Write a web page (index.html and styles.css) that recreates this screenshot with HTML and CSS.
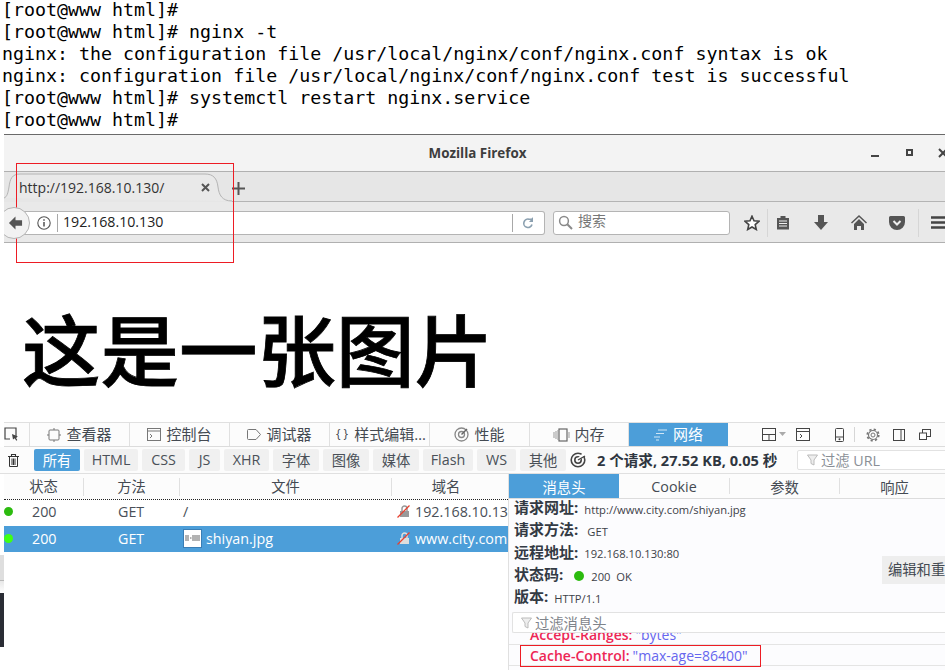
FILE: index.html
```html
<!DOCTYPE html>
<html lang="zh-CN">
<head>
<meta charset="utf-8">
<title>nginx cache-control</title>
<link rel="stylesheet" href="styles.css">
</head>
<body>
<div class="page">
  <pre class="terminal">[root@www html]#
[root@www html]# nginx -t
nginx: the configuration file /usr/local/nginx/conf/nginx.conf syntax is ok
nginx: configuration file /usr/local/nginx/conf/nginx.conf test is successful
[root@www html]# systemctl restart nginx.service
[root@www html]#</pre>

  <section class="window">
    <div class="titlebar">
      <span></span>
      <span class="wintitle">Mozilla Firefox</span>
      <div class="winctl">
        <svg class="w-min" width="10" height="10" viewBox="0 0 10 10"><rect x="1" y="7" width="8" height="2" fill="#444"/></svg>
        <svg width="8" height="8" viewBox="0 0 8 8"><rect x="1" y="1" width="5" height="5" fill="none" stroke="#444" stroke-width="2"/></svg>
        <svg width="10" height="10" viewBox="0 0 10 10"><path d="M1 1l8 8M9 1l-8 8" stroke="#444" stroke-width="2"/></svg>
      </div>
    </div>
    <div class="tabstrip">
      <div class="tab">
        <svg class="tabshape" width="229" height="29" viewBox="0 0 229 29"><path d="M0 25C3 24 4 20 5 14C6 6 8 1 16 1H201C209 1 213 5 214 14C215 22 218 28 228 28" fill="#e9e9e9" stroke="#b4b4b4"/></svg>
        <span class="tabtext">http://192.168.10.130/</span>
        <svg class="tabclose" width="9" height="9" viewBox="0 0 9 9"><path d="M1 1l7 7M8 1l-7 7" stroke="#555" stroke-width="2"/></svg>
      </div>
      <svg class="newtab" width="13" height="13" viewBox="0 0 13 13"><path d="M6.500 0v13M0 6.500h13" stroke="#555" stroke-width="2"/></svg>
    </div>
    <div class="navbar">
      <div class="backbtn">
        <svg width="15" height="14" viewBox="0 0 16 14"><path d="M8 0L1 7l7 7v-4h7V4H8z" fill="#555"/></svg>
      </div>
      <div class="urlbar">
        <svg width="14" height="14" viewBox="0 0 14 14"><circle cx="7" cy="7" r="6.200" fill="none" stroke="#555" stroke-width="1.100"/><path d="M7 6v4.500M7 3.200v1.600" stroke="#444" stroke-width="1.400"/></svg>
        <span class="vsep"></span>
        <span class="urltext">192.168.10.130</span>
        <span class="vsep end"></span>
        <svg class="reload" width="12" height="12" viewBox="0 0 12 12"><path d="M10 7.500A4.200 4.200 0 1 1 7 2.200H10" fill="none" stroke="#8ba0b0" stroke-width="1.600"/><path d="M11 0v5H7z" fill="#8ba0b0"/></svg>
      </div>
      <div class="searchbar">
        <svg width="15" height="15" viewBox="0 0 15 15"><circle cx="6" cy="6" r="4.400" fill="none" stroke="#8a8a8a" stroke-width="1.500"/><path d="M9.300 9.300L14 14" stroke="#8a8a8a" stroke-width="2"/></svg>
        <span class="searchtext">搜索</span>
      </div>
      <div class="navicons">
        <svg class="i-star" width="16" height="16" viewBox="0 0 16 16"><path d="M8 1.200l2 4.600 5 .5-3.800 3.300 1.100 4.900L8 12l-4.300 2.500 1.100-4.900L1 6.300l5-.5z" fill="#fff" stroke="#444" stroke-width="1.600"/></svg>
        <span class="vsep light sep-star"></span>
        <svg class="i-clip" width="14" height="15" viewBox="0 0 14 15"><path d="M1 3h3.500V1h5v2H13v11.500H1z" fill="#555"/><path d="M3 6h8M3 8.500h8M3 11h8" stroke="#eee" stroke-width="1"/></svg>
        <svg class="i-down" width="16" height="15" viewBox="0 0 16 15"><path d="M5 0h6v7h4l-7 8-7-8h4z" fill="#555"/></svg>
        <svg class="i-home" width="16" height="15" viewBox="0 0 16 15"><path d="M8 0L0 7.500l1 1L8 2l7 6.500 1-1z" fill="#555"/><path d="M3 9l5-5 5 5v6h-3v-4H6v4H3z" fill="#555"/></svg>
        <svg class="i-pocket" width="16" height="14" viewBox="0 0 16 14"><path d="M1.500 0h13A1.500 1.500 0 0 1 16 1.500V6a8 8 0 0 1-16 0V1.500A1.500 1.500 0 0 1 1.500 0z" fill="#555"/><path d="M4.500 5L8 8.500 11.500 5" fill="none" stroke="#eee" stroke-width="2"/></svg>
        <span class="vsep light sep-menu"></span>
        <svg class="i-menu" width="16" height="13" viewBox="0 0 16 13"><path d="M0 1.500h16M0 6.500h16M0 11.500h16" stroke="#444" stroke-width="2.400"/></svg>
      </div>
    </div>
  </section>

  <h1 class="headline">这是一张图片</h1>

  <section class="devtools">
    <div class="dt-tabs">
      <div class="dt-pick">
        <svg width="16" height="15" viewBox="0 0 16 15"><path d="M12 11V1H1v11h5" fill="none" stroke="#444" stroke-width="1.200"/><path d="M8 7l6 2.500-2.300 1 1.600 2.500-1 .7-1.600-2.500L9 12.500z" fill="#444"/></svg>
      </div>
      <div class="dt-tab">
        <svg width="14" height="14" viewBox="0 0 14 14"><rect x="2" y="2" width="10" height="10" rx="1" fill="none" stroke="#777"/><path d="M0 7h2M12 7h2M7 0v2M7 12v2" stroke="#777"/></svg><span>查看器</span></div>
      <div class="dt-tab">
        <svg width="14" height="13" viewBox="0 0 14 13"><rect x=".5" y=".5" width="13" height="12" fill="none" stroke="#777"/><path d="M.5 3h13M3 6l2 2-2 2" fill="none" stroke="#777"/></svg><span>控制台</span></div>
      <div class="dt-tab">
        <svg width="14" height="11" viewBox="0 0 14 11"><path d="M1.500.5H9L13.500 5.500 9 10.500H1.500a1 1 0 0 1-1-1v-8a1 1 0 0 1 1-1z" fill="none" stroke="#777"/></svg><span>调试器</span></div>
      <div class="dt-tab dt-tab-style"><span class="braces">{ }</span><span>样式编辑…</span></div>
      <div class="dt-tab">
        <svg width="15" height="15" viewBox="0 0 15 15"><circle cx="7.500" cy="7.500" r="6.500" fill="none" stroke="#888" stroke-width="1.300"/><circle cx="7.500" cy="7.500" r="3" fill="none" stroke="#888" stroke-width="1.300"/><path d="M7.500 7.500L13 2" stroke="#666" stroke-width="1.500"/></svg><span>性能</span></div>
      <div class="dt-tab dt-tab-mem">
        <svg width="19" height="14" viewBox="0 0 19 14"><rect x="6" y="1" width="8" height="12" fill="none" stroke="#666" stroke-width="1.200"/><path d="M1 4v6M3 3v8M5 2v10M16 4v6" stroke="#999"/></svg><span>内存</span></div>
      <div class="dt-tab active">
        <svg width="14" height="12" viewBox="0 0 14 12"><path d="M4 1h9M2 4.500h8M0 8h6M2 11h3" stroke="#cfe5f5" stroke-width="1.200"/></svg><span>网络</span></div>
      <div class="dt-tools">
        <svg class="t-layout" width="24" height="13" viewBox="0 0 24 13"><rect x=".5" y=".5" width="13" height="12" fill="none" stroke="#444"/><path d="M.5 6.500h13M7 6.500v6" stroke="#444"/><path d="M17 4h7l-3.500 4z" fill="#aaa"/></svg>
        <svg class="t-console" width="14" height="13" viewBox="0 0 14 13"><rect x=".5" y=".5" width="13" height="12" fill="none" stroke="#444"/><path d="M.5 3.500h13M4 6l2 2-2 2" fill="none" stroke="#444"/></svg>
        <svg class="t-phone" width="9" height="14" viewBox="0 0 9 14"><rect x=".5" y=".5" width="8" height="13" rx="1" fill="none" stroke="#444"/><path d="M.5 9h8" stroke="#444"/><circle cx="4.500" cy="11.300" r="1" fill="#444"/></svg>
        <span class="vsep t-sep"></span>
        <svg class="t-gear" width="14" height="14" viewBox="0 0 14 14"><circle cx="7" cy="7" r="2" fill="none" stroke="#777"/><circle cx="7" cy="7" r="4.500" fill="none" stroke="#777" stroke-width="1.100"/><circle cx="7" cy="7" r="5.700" fill="none" stroke="#777" stroke-width="1.800" stroke-dasharray="2.200 2.280"/></svg>
        <svg class="t-side" width="12" height="12" viewBox="0 0 12 12"><rect x=".5" y=".5" width="11" height="11" fill="none" stroke="#444"/><path d="M8 .5v11" stroke="#444"/></svg>
        <svg class="t-win" width="12" height="11" viewBox="0 0 12 11"><rect x="3.500" y=".5" width="8" height="7" fill="none" stroke="#444"/><rect x=".5" y="4" width="7" height="6.500" fill="#fff" stroke="#444"/></svg>
        <svg class="t-x" width="8" height="8" viewBox="0 0 8 8"><path d="M1 1l6 6M7 1L1 7" stroke="#444"/></svg>
      </div>
    </div>

    <div class="dt-filter">
      <svg class="trash" width="11" height="13" viewBox="0 0 11 13"><path d="M0 2.500h11M3.500 2V.5h4V2" fill="none" stroke="#333" stroke-width="1.100"/><path d="M1.500 3v9.500h8V3M4 4.500v6.500M5.500 4.500v6.500M7 4.500v6.500" fill="none" stroke="#333"/></svg>
      <button class="fbtn on w46">所有</button>
      <button class="fbtn w54">HTML</button>
      <button class="fbtn w43">CSS</button>
      <button class="fbtn w31">JS</button>
      <button class="fbtn w45">XHR</button>
      <button class="fbtn w46">字体</button>
      <button class="fbtn w46">图像</button>
      <button class="fbtn w46">媒体</button>
      <button class="fbtn w50">Flash</button>
      <button class="fbtn w39">WS</button>
      <button class="fbtn w46">其他</button>
      <svg class="speed" width="16" height="16" viewBox="0 0 16 16"><circle cx="8" cy="8" r="6.800" fill="none" stroke="#444" stroke-width="1.600"/><circle cx="8" cy="8" r="3.200" fill="none" stroke="#444" stroke-width="1.600"/><path d="M8 8l6-6" stroke="#fff" stroke-width="3"/><path d="M8 8l7-4" stroke="#444" stroke-width="1.400"/></svg>
      <span class="summary">2 个请求, 27.52 KB, 0.05 秒</span>
      <div class="urlfilter">
        <svg width="11" height="12" viewBox="0 0 11 12"><path d="M.5 1h10L7 6v5L4 9.500V6z" fill="#eee" stroke="#bbb"/></svg>
        <span>过滤 URL</span>
      </div>
    </div>

    <div class="dt-body">
      <div class="reqpane">
        <div class="reqhead">
          <span>状态</span><span>方法</span><span>文件</span><span>域名</span>
        </div>
        <div class="reqrow first">
          <span class="cell-status"><i class="dot"></i>200</span>
          <span class="cell-method">GET</span>
          <span class="cell-file">/</span>
          <span class="cell-domain"><svg width="13" height="13" viewBox="0 0 13 13"><rect x="3" y="6" width="9" height="6" fill="#999"/><path d="M5 6V3.500a2.500 2.500 0 0 1 5 0V6" fill="none" stroke="#999" stroke-width="1.500"/><path d="M.5 12.500L12.500 .5" stroke="#e8402e" stroke-width="1.300"/></svg>192.168.10.130</span>
        </div>
        <div class="reqrow selected">
          <span class="cell-status"><i class="dot"></i>200</span>
          <span class="cell-method">GET</span>
          <span class="cell-file"><span class="thumb"><svg width="16" height="6" viewBox="0 0 16 6"><path d="M1 0v6M3 0v6M5 3h1.500M8 0v6M10 0v6M12 0v6M14 0v6" stroke="#666"/></svg></span>shiyan.jpg</span>
          <span class="cell-domain"><svg width="13" height="13" viewBox="0 0 13 13"><rect x="3" y="6" width="9" height="6" fill="#ddd"/><path d="M5 6V3.500a2.500 2.500 0 0 1 5 0V6" fill="none" stroke="#ddd" stroke-width="1.500"/><path d="M.5 12.500L12.500 .5" stroke="#e8402e" stroke-width="1.300"/></svg>www.city.com</span>
        </div>
        <div class="strip">
          <div class="strip-gray"></div>
          <div class="strip-fade"></div>
          <div class="strip-dark"></div>
        </div>
      </div>

      <div class="detail">
        <div class="detail-tabs">
          <span class="dtab on">消息头</span><span class="dtab">Cookie</span><span class="dtab">参数</span><span class="dtab last">响应</span>
        </div>
        <div class="summaryrows">
          <div class="sumrow"><b>请求网址:</b><span>http://www.city.com/shiyan.jpg</span></div>
          <div class="sumrow"><b>请求方法:</b><span class="pad">GET</span></div>
          <div class="sumrow"><b>远程地址:</b><span>192.168.10.130:80</span></div>
          <div class="sumrow"><b>状态码:</b><i class="dot big"></i><span>200&nbsp; OK</span><button class="editbtn">编辑和重发</button></div>
          <div class="sumrow"><b>版本:</b><span>HTTP/1.1</span></div>
        </div>
        <div class="headerfilter">
          <svg width="11" height="12" viewBox="0 0 11 12"><path d="M.5 1h10L7 6v5L4 9.500V6z" fill="#eee" stroke="#bbb"/></svg>
          <span>过滤消息头</span>
        </div>
        <div class="hdrlist">
          <div class="hdr clipped"><b>Accept-Ranges:</b> <span>"bytes"</span></div>
          <div class="hdr"><b>Cache-Control:</b> <span>"max-age=86400"</span></div>
        </div>
      </div>
    </div>
  </section>

  <div class="redbox box-tab"></div>
  <div class="redbox box-cache"></div>
</div>
</body>
</html>
```

FILE: styles.css
```css
* { box-sizing: border-box; }
html, body { margin: 0; padding: 0; background: #fff; }
.page {
  position: relative;
  width: 945px;
  height: 670px;
  overflow: hidden;
  font-family: "Open Sans", "Noto Sans CJK SC", sans-serif;
  color: #3c4148;
}
svg { display: block; flex: none; }

.terminal {
  margin: -1px 0 0 2px;
  height: 135px;
  font: 18.3px/22px "DejaVu Sans Mono", monospace;
  color: #000;
}

.window { margin-left: 4px; border-top: 1px solid #6a6a6a; }
.titlebar {
  height: 37px;
  display: grid;
  grid-template-columns: 1fr auto 1fr;
  align-items: center;
  padding-left: 6px;
  background: #f3f3f3;
  border-bottom: 1px solid #b0b0b0;
}
.wintitle { font-size: 13.400px; font-weight: 700; color: #3d3d3d; }
.winctl { display: flex; align-items: center; justify-content: flex-end; gap: 24px; margin-right: -3px; }
.w-min { margin-right: 2px; }

.tabstrip {
  height: 30px;
  display: flex;
  align-items: flex-start;
  background: #e6e6e6;
  border-bottom: 1px solid #b4b4b4;
}
.tab {
  position: relative;
  width: 228px;
  height: 30px;
  display: flex;
  align-items: center;
  padding: 0 0 0 15px;
  background: #e6e6e6;
}
.tabshape { position: absolute; left: 0; top: 1px; }
.tabtext { position: relative; width: 182px; font-size: 14px; color: #333; }
.tabclose { position: relative; }
.newtab { margin: 10px 0 0 0; }

.navbar {
  height: 41px;
  display: flex;
  align-items: center;
  background: #e9e9e9;
  border-bottom: 1px solid #b0b0b0;
  padding-top: 1px;
  overflow: hidden;
}
.backbtn {
  width: 32px;
  height: 32px;
  flex: none;
  margin: 0 -10px 0 -6px;
  padding-left: 9px;
  border-radius: 50%;
  background: #f2f2f2;
  border: 1px solid #b4b4b4;
  display: flex;
  align-items: center;
  position: relative;
  z-index: 1;
}
.urlbar {
  width: 525px;
  height: 24px;
  flex: none;
  display: flex;
  align-items: center;
  padding-left: 17px;
  background: #fff;
  border: 1px solid #b4b4b4;
  border-left: 0;
  border-radius: 0 3px 3px 0;
}
.vsep { width: 1px; height: 18px; background: #a8a8a8; flex: none; }
.vsep.light { height: 28px; background: #d6d6d6; }
.urlbar .vsep { margin-left: 6px; }
.urltext { margin-left: 5px; width: 449px; padding-bottom: 2px; font-size: 14.200px; color: #222; }
.urlbar .vsep.end { margin-left: 0; }
.reload { margin-left: 9px; }
.searchbar {
  width: 177px;
  height: 24px;
  flex: none;
  margin-left: 8px;
  display: flex;
  align-items: center;
  gap: 5px;
  padding-left: 4px;
  background: #fff;
  border: 1px solid #b4b4b4;
  border-radius: 3px;
}
.searchtext { font-size: 14px; line-height: 14px; padding-bottom: 4px; color: #777; }
.navicons { display: flex; align-items: center; flex: none; }
.i-star { margin-left: 14px; }
.sep-star { margin-left: 7px; }
.i-clip { margin-left: 8px; }
.i-down { margin-left: 23px; }
.i-home { margin-left: 22px; }
.i-pocket { margin-left: 22px; }
.sep-menu { margin-left: 13px; }
.i-menu { margin-left: 12px; }

.headline {
  margin: 0;
  height: 179px;
  padding: 58px 0 0 22px;
  font: 500 78.500px/92px "Noto Sans CJK SC", sans-serif;
  -webkit-text-stroke: .8px #000;
  color: #000;
}

.devtools { font-size: 14.300px; }
.dt-tabs {
  height: 25px;
  margin-left: 4px;
  display: flex;
  align-items: stretch;
  background: #fcfcfc;
  border-top: 1px solid #e0e0e0;
  border-bottom: 1px solid #dcdcdc;
}
.dt-pick {
  width: 26px;
  flex: none;
  display: flex;
  align-items: center;
  border-right: 1px solid #e0e0e0;
}
.dt-tab {
  width: 100px;
  flex: none;
  display: flex;
  align-items: center;
  justify-content: center;
  gap: 5px;
  padding-bottom: 2px;
  border-right: 1px solid #e0e0e0;
  font-size: 15px;
  color: #444a52;
  white-space: nowrap;
}
.dt-tab svg { margin-top: 2px; }
.dt-tab-style { gap: 6px; justify-content: flex-start; padding-left: 6px; }
.dt-tab-mem { width: 99px; gap: 2px; }
.braces { font-family: "Open Sans", sans-serif; font-size: 12px; }
.dt-tab.active { width: 99px; background: #4c9ed9; color: #fff; border-right: 0; }
.dt-tools { display: flex; align-items: center; flex: 1; min-width: 0; overflow: hidden; }
.t-layout { margin-left: 34px; }
.t-console { margin-left: 10px; }
.t-phone { margin-left: 25px; }
.vsep.t-sep { height: 15px; background: #d6d6d6; margin-left: 10px; }
.t-gear { margin-left: 11px; }
.t-side { margin-left: 13px; }
.t-win { margin-left: 14px; }
.t-x { margin-left: 14px; }

.dt-filter {
  height: 27px;
  display: flex;
  align-items: center;
  padding-left: 8px;
  background: #fcfcfc;
  border-bottom: 1px solid #e0e0e0;
  overflow: hidden;
}
.trash { margin-right: 15px; }
.fbtn {
  height: 22px;
  margin-right: 4px;
  padding: 0 0 2px;
  flex: none;
  border: 0;
  border-radius: 2px;
  background: #f0f0f0;
  font: 14.300px "Open Sans", "Noto Sans CJK SC", sans-serif;
  color: #4a5058;
}
.fbtn.on { background: #4c9ed9; color: #fff; }
.w31 { width: 31px; }
.w39 { width: 39px; }
.w43 { width: 43px; }
.w45 { width: 45px; }
.w46 { width: 46px; }
.w50 { width: 50px; }
.w54 { width: 54px; }
.speed { margin: 0 11px 0 0; }
.summary { width: 200px; flex: none; padding-bottom: 2px; font-size: 14.600px; font-weight: 700; color: #2f3640; white-space: nowrap; }
.urlfilter {
  width: 160px;
  height: 20px;
  flex: none;
  display: flex;
  align-items: center;
  gap: 3px;
  padding-left: 9px;
  border: 1px solid #e2e2e2;
  border-radius: 2px;
  background: #fff;
  color: #8a8f96;
}
.urlfilter span { padding-bottom: 2px; }

.dt-body { display: flex; height: 196px; }
.reqpane { width: 508px; flex: none; }
.reqhead, .reqrow {
  margin-left: 4px;
  display: grid;
  grid-template-columns: 80px 96px 212px 116px;
}
.reqhead {
  height: 26px;
  align-items: center;
  background: #fcfcfc;
  border-bottom: 1px dotted #222;
  text-align: center;
  font-size: 14.300px;
  color: #444a52;
}
.reqhead span { border-right: 1px solid #e0e0e0; line-height: 18px; }
.reqhead span:nth-child(4) { border-right: 0; padding-right: 8px; }
.reqrow {
  height: 26px;
  padding-bottom: 2px;
  align-items: center;
  font-size: 14.300px;
  color: #4a5058;
  white-space: nowrap;
  overflow: hidden;
}
.reqrow.first { padding-bottom: 4px; }
.reqrow.selected { background: #4c9ed9; color: #fff; }
.cell-status { display: flex; align-items: center; }
.dot { display: block; width: 9px; height: 9px; border-radius: 50%; background: #2cbb0f; margin-right: 19px; flex: none; }
.selected .dot { background: #40ff13; }
.cell-method { padding-left: 34px; }
.cell-file { display: flex; align-items: center; padding-left: 3px; }
.thumb {
  width: 19px;
  height: 19px;
  margin-right: 4px;
  display: flex;
  align-items: center;
  justify-content: center;
  background: #fff;
  border: 1px solid #3a7eb5;
}
.cell-domain { display: flex; align-items: center; gap: 5px; padding-left: 5px; overflow: hidden; }
.strip { width: 4px; margin-top: 3px; }
.strip-gray { height: 26px; background: #dedede; border-bottom: 1px solid #b8b8b8; }
.strip-fade { height: 12px; background: linear-gradient(#e8e8e8, #fff); }
.strip-dark { height: 54px; background: #2a2d35; }

.detail { flex: 1; border-left: 1px solid #e0e0e0; background: #fcfcfe; min-width: 0; }
.detail-tabs { height: 25px; display: flex; align-items: center; border-bottom: 1px solid #dcdcdc; background: #fcfcfc; }
.dtab { width: 110px; flex: none; height: 24px; display: flex; align-items: center; justify-content: center; font-size: 14.300px; color: #444a52; }
.dtab + .dtab { border-left: 1px solid #e0e0e0; height: 16px; }
.dtab.on { background: #4c9ed9; color: #fff; }
.dtab.on + .dtab { border-left: 0; }
.summaryrows { padding: 0 0 0 5px; height: 113px; }
.sumrow {
  height: 22.300px;
  padding-bottom: 2px;
  display: flex;
  align-items: center;
  font-size: 11.200px;
  color: #3c4148;
  white-space: nowrap;
}
.sumrow b { font-size: 15px; line-height: 20px; font-weight: 700; color: #333a44; margin: 0 6px 4px 0; }
.sumrow .pad { margin-left: 3px; }
.dot.big { width: 10px; height: 10px; margin: 0 7px 0 5px; }
.editbtn {
  width: 63px;
  height: 28px;
  margin: 0 0 12px auto;
  padding: 0 0 3px 6px;
  flex: none;
  overflow: hidden;
  border: 0;
  background: #eeeeee;
  font: 14.300px "Open Sans", "Noto Sans CJK SC", sans-serif;
  color: #444a52;
  text-align: left;
  white-space: nowrap;
}
.headerfilter {
  height: 21px;
  margin-left: 3px;
  display: flex;
  align-items: center;
  gap: 3px;
  padding-left: 8px;
  border: 1px solid #e2e2e2;
  border-right: 0;
  border-radius: 2px 0 0 2px;
  background: #fff;
  font-size: 14.300px;
  color: #7f848b;
}
.hdrlist { font-size: 14.300px; }
.hdr {
  height: 21px;
  display: flex;
  align-items: center;
  gap: 3px;
  padding-left: 21px;
  border-bottom: 1px solid #e4e4e4;
  color: #6666ee;
  white-space: nowrap;
}
.hdr span { font-size: 14px; }
.hdr b { font-size: 14px; font-weight: 600; color: #ed2655; }
.hdr.clipped { height: 12px; overflow: hidden; align-items: flex-end; }

.redbox { position: absolute; border: 1px solid #ed1c24; }
.box-tab { left: 16px; top: 163px; width: 218px; height: 100px; }
.box-cache { left: 520px; top: 645px; width: 241px; height: 22px; }
```
